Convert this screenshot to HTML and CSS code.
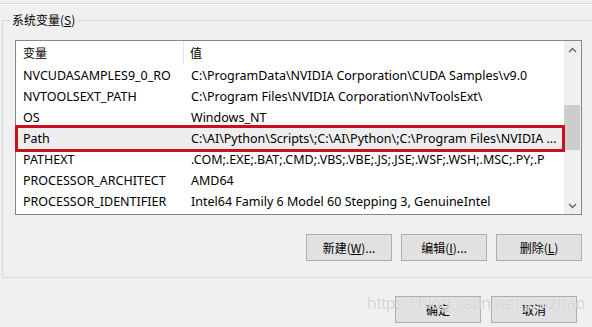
FILE: index.html
```html
<!DOCTYPE html>
<html>
<head>
    <meta charset="utf-8">
    <title>环境变量</title>
    <link rel="stylesheet" href="styles.css">
</head>
<body>
    <div class="dialog">
        <div class="user-vars-edge"></div>

        <fieldset class="sys-vars">
            <legend>系统变量(<u>S</u>)</legend>

            <div class="list">
                <div class="rows">
                    <div class="row head">
                        <span class="name">变量</span>
                        <span class="value">值</span>
                    </div>
                    <div class="row">
                        <span class="name">NVCUDASAMPLES9_0_RO</span>
                        <span class="value">C:\ProgramData\NVIDIA Corporation\CUDA Samples\v9.0</span>
                    </div>
                    <div class="row">
                        <span class="name">NVTOOLSEXT_PATH</span>
                        <span class="value">C:\Program Files\NVIDIA Corporation\NvToolsExt\</span>
                    </div>
                    <div class="row">
                        <span class="name">OS</span>
                        <span class="value">Windows_NT</span>
                    </div>
                    <div class="row selected">
                        <span class="name">Path</span>
                        <span class="value">C:\AI\Python\Scripts\;C:\AI\Python\;C:\Program Files\NVIDIA ...</span>
                    </div>
                    <div class="row">
                        <span class="name">PATHEXT</span>
                        <span class="value">.COM;.EXE;.BAT;.CMD;.VBS;.VBE;.JS;.JSE;.WSF;.WSH;.MSC;.PY;.P</span>
                    </div>
                    <div class="row">
                        <span class="name">PROCESSOR_ARCHITECT</span>
                        <span class="value">AMD64</span>
                    </div>
                    <div class="row">
                        <span class="name">PROCESSOR_IDENTIFIER</span>
                        <span class="value">Intel64 Family 6 Model 60 Stepping 3, GenuineIntel</span>
                    </div>
                </div>

                <div class="scrollbar">
                    <div class="arrow">
                        <svg width="9" height="6" viewBox="0 0 9 6"><path d="M1 5 L4.5 1.5 L8 5" fill="none" stroke="#606060" stroke-width="1.4"/></svg>
                    </div>
                    <div class="track"><div class="thumb"></div></div>
                    <div class="arrow">
                        <svg width="9" height="6" viewBox="0 0 9 6"><path d="M1 1 L4.5 4.5 L8 1" fill="none" stroke="#606060" stroke-width="1.4"/></svg>
                    </div>
                </div>
            </div>

            <div class="buttons">
                <button class="btn">新建(<u>W</u>)...</button>
                <button class="btn">编辑(<u>I</u>)...</button>
                <button class="btn">删除(<u>L</u>)</button>
            </div>
        </fieldset>

        <div class="footer">
            <button class="btn">确定</button>
            <button class="btn">取消</button>
        </div>

        <div class="watermark">https://blog.csdn.net/jcsizhao</div>
    </div>
</body>
</html>
```

FILE: styles.css
```css
body {
    margin: 0;
    padding: 0;
    background: #f0f0f0;
}

.dialog {
    position: relative;
    width: 592px;
    height: 327px;
    overflow: hidden;
    font-family: "Noto Sans", "Noto Sans CJK SC", sans-serif;
    font-size: 12px;
    color: #000;
}

.user-vars-edge {
    height: 3px;
    border-bottom: 1px solid #dcdcdc;
    box-shadow: 0 1px 0 #fff;
}

.sys-vars {
    margin: 7px 0 0 2px;
    padding: 11px 0 16px 12px;
    width: 620px;
    border: 1px solid #d9d9d9;
    min-width: 0;
}

.sys-vars legend {
    margin-left: -5px;
    padding: 0 2px;
    line-height: 18px;
    font-family: "Noto Sans CJK SC", sans-serif;
    font-size: 12px;
}

.list {
    display: flex;
    width: 565px;
    height: 173px;
    border: 1px solid #828790;
    background: white;
}

.rows {
    flex: 1;
    min-width: 0;
}

.row {
    position: relative;
    display: flex;
    height: 21px;
    line-height: 21px;
    font-size: 12.5px;
    white-space: nowrap;
}

.row .name {
    width: 161px;
    padding-left: 7px;
    flex: none;
    overflow: hidden;
}

.row .value {
    flex: 1;
    padding-left: 7px;
    overflow: hidden;
}

.row.head {
    height: 24px;
    line-height: 24px;
    font-family: "Noto Sans CJK SC", sans-serif;
    font-size: 12px;
}

.row.head .name {
    width: 160px;
    border-right: 1px solid #e5e5e5;
}

.row.head .value {
    padding-left: 6px;
}

.row.selected {
    background: #eeeeee;
}

.row.selected::after {
    content: "";
    position: absolute;
    top: -3px;
    bottom: -3px;
    left: -1px;
    right: -1px;
    border: 3px solid #c8101e;
}

.scrollbar {
    width: 17px;
    display: flex;
    flex-direction: column;
    background: #f0f0f0;
}

.arrow {
    height: 17px;
    display: flex;
    align-items: center;
    justify-content: center;
}

.track {
    flex: 1;
    padding-top: 47px;
}

.thumb {
    height: 45px;
    margin: 0 1px 0 0;
    background: #cdcdcd;
}

.buttons {
    display: flex;
    justify-content: flex-end;
    gap: 9px;
    width: 567px;
    margin-top: 19px;
}

.btn {
    width: 86px;
    height: 27px;
    padding: 0;
    border: 1px solid #adadad;
    background: #e1e1e1;
    font-family: "Noto Sans CJK SC", sans-serif;
    font-size: 12px;
    color: #000;
}

.footer {
    display: flex;
    justify-content: flex-end;
    gap: 10px;
    padding: 18px 15px 0 0;
}

.watermark {
    position: absolute;
    left: 367px;
    top: 294px;
    font-family: "Liberation Sans", sans-serif;
    font-size: 17px;
    color: rgba(205, 205, 205, 0.85);
    text-shadow: 0 0 1px #fff;
}
```
